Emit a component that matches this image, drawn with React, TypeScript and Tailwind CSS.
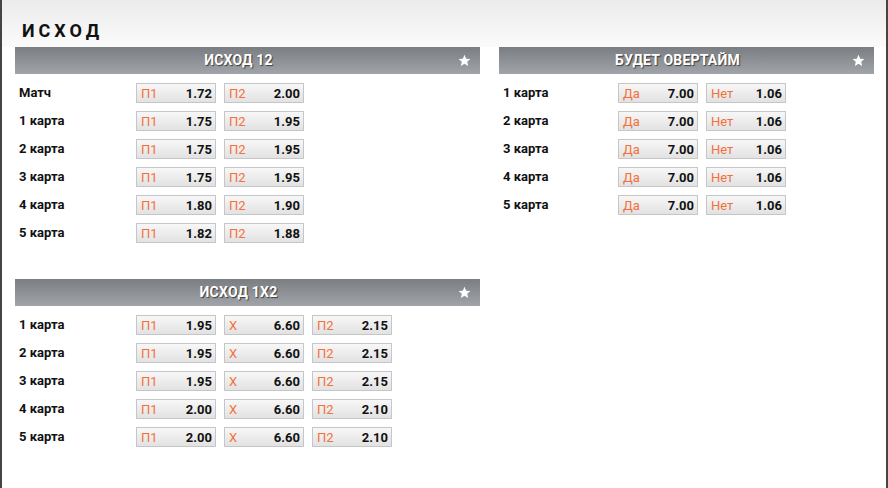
import React from "react";

type Odd = { l: string; v: string };
type Row = { name: string; odds: Odd[] };

const Star = () => (
  <svg width="13" height="13" viewBox="0 0 24 24" className="absolute right-[9px] top-[7px]">
    <path d="M12 1.5l3.1 7.2 7.8.6-5.9 5.1 1.8 7.6L12 18l-6.8 4 1.8-7.6-5.9-5.1 7.8-.6z" fill="#fff" />
  </svg>
);

const Header = ({ title }: { title: string }) => (
  <div
    className="relative h-[27px] flex items-center justify-center pr-[18px] text-white font-bold text-[14px] tracking-[0.2px] bg-gradient-to-b from-[#7a7e82] to-[#a1a5a9]"
    style={{ textShadow: "1px 1px 1px rgba(0,0,0,0.6)" }}
  >
    {title}
    <Star />
  </div>
);

const OddBtn = ({ o }: { o: Odd }) => (
  <div className="w-[80px] h-[20px] border border-[#c6c6c6] bg-gradient-to-b from-[#f7f7f7] to-[#e2e2e2] flex items-center justify-between pl-[4px] pr-[3px] text-[13px] leading-none">
    <span className="text-[#f4703a]">{o.l}</span>
    <span className="font-bold text-[#111]">{o.v}</span>
  </div>
);

const Table = ({ title, rows, labelW }: { title: string; rows: Row[]; labelW: number }) => (
  <div>
    <Header title={title} />
    <div className="flex flex-col gap-[8px] pt-[9px]">
      {rows.map((r) => (
        <div key={r.name} className="flex items-center h-[20px]">
          <div
            className={`pl-[4px] font-bold text-[13px] text-[#111] ${labelW === 121 ? "w-[121px]" : "w-[119px]"}`}
          >
            {r.name}
          </div>
          <div className="flex gap-[8px]">
            {r.odds.map((o, i) => (
              <OddBtn key={i} o={o} />
            ))}
          </div>
        </div>
      ))}
    </div>
  </div>
);

const p = (a: string, b: string): Odd[] => [
  { l: "П1", v: a },
  { l: "П2", v: b },
];
const p3 = (a: string, x: string, b: string): Odd[] => [
  { l: "П1", v: a },
  { l: "Х", v: x },
  { l: "П2", v: b },
];
const yn = (): Odd[] => [
  { l: "Да", v: "7.00" },
  { l: "Нет", v: "1.06" },
];

const t12: Row[] = [
  { name: "Матч", odds: p("1.72", "2.00") },
  { name: "1 карта", odds: p("1.75", "1.95") },
  { name: "2 карта", odds: p("1.75", "1.95") },
  { name: "3 карта", odds: p("1.75", "1.95") },
  { name: "4 карта", odds: p("1.80", "1.90") },
  { name: "5 карта", odds: p("1.82", "1.88") },
];

const t1x2: Row[] = [
  { name: "1 карта", odds: p3("1.95", "6.60", "2.15") },
  { name: "2 карта", odds: p3("1.95", "6.60", "2.15") },
  { name: "3 карта", odds: p3("1.95", "6.60", "2.15") },
  { name: "4 карта", odds: p3("2.00", "6.60", "2.10") },
  { name: "5 карта", odds: p3("2.00", "6.60", "2.10") },
];

const tot: Row[] = ["1 карта", "2 карта", "3 карта", "4 карта", "5 карта"].map((n) => ({
  name: n,
  odds: yn(),
}));

export default function App() {
  return (
    <div
      className="w-[888px] h-[488px] bg-white border-l-2 border-r-2 border-[#444] overflow-hidden"
      style={{ fontFamily: "Roboto, 'Liberation Sans', sans-serif" }}
    >
      <div className="h-[47px] bg-gradient-to-b from-[#ebebeb] to-[#fbfbfb] flex items-end pb-[7px] pl-[20px]">
        <span className="font-bold text-[18px] tracking-[4px] text-[#111] leading-none">ИСХОД</span>
      </div>
      <div className="flex gap-[19px] pl-[13px]">
        <div className="w-[465px] flex flex-col gap-[36px]">
          <Table title="ИСХОД 12" rows={t12} labelW={121} />
          <Table title="ИСХОД 1X2" rows={t1x2} labelW={121} />
        </div>
        <div className="w-[375px]">
          <Table title="БУДЕТ ОВЕРТАЙМ" rows={tot} labelW={119} />
        </div>
      </div>
    </div>
  );
}
